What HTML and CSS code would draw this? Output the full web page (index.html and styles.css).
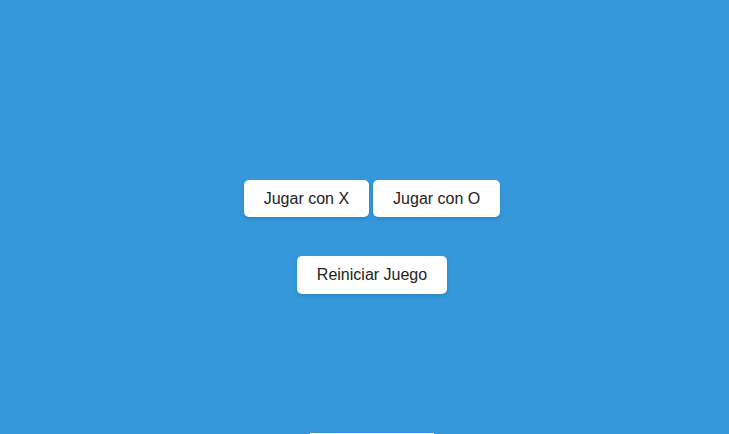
FILE: index.html
```html
<!DOCTYPE html>
<html lang="es">
<head>
<meta charset="utf-8">
<title>Tres en raya</title>
<link rel="stylesheet" href="styles.css">
</head>
<body>
<main class="game">
  <div class="choices">
    <button class="btn btn-x">Jugar con X</button>
    <button class="btn btn-o">Jugar con O</button>
  </div>
  <button class="btn btn-reset">Reiniciar Juego</button>
  <div class="board"></div>
</main>
</body>
</html>
```
FILE: styles.css
```css
html, body {
  margin: 0;
  padding: 0;
  height: 100%;
  overflow: hidden;
}
body {
  background: #3498db;
  font-family: "Liberation Sans", Arial, sans-serif;
}
.game {
  display: flex;
  flex-direction: column;
  align-items: center;
  padding-top: 180px;
  padding-left: 15px;
}
.choices {
  display: flex;
  gap: 4px;
}
.btn {
  background: #fff;
  color: #222;
  border: none;
  border-radius: 5px;
  font-family: "Liberation Sans", Arial, sans-serif;
  font-size: 16px;
  white-space: nowrap;
  height: 37px;
  padding: 0 20px;
  box-shadow: 0 2px 4px rgba(0, 0, 0, 0.12);
}
.btn-reset {
  margin-top: 39px;
  height: 38px;
}
.board {
  margin-top: 139px;
  width: 124px;
  height: 100px;
  background: #fff;
}
```
